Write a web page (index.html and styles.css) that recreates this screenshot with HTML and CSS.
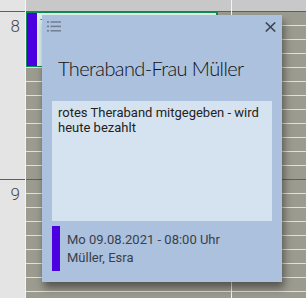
FILE: index.html
```html
<!DOCTYPE html>
<html lang="de">
<head>
<meta charset="utf-8">
<title>Kalender</title>
<link rel="stylesheet" href="styles.css">
</head>
<body>
<div class="cal">
  <div class="times">
    <div class="pre"></div>
    <div class="hour"><span class="hour-label">8</span></div>
    <div class="hour"><span class="hour-label">9</span></div>
  </div>
  <div class="day">
    <div class="pre"></div>
    <div class="hour slots"></div>
    <div class="hour slots"></div>
    <div class="event">
      <div class="event-bar"></div>
      <div class="event-body">Theraband-Frau Müller</div>
    </div>
  </div>
  <div class="day">
    <div class="pre"></div>
    <div class="hour slots"></div>
    <div class="hour slots"></div>
  </div>

  <div class="popup">
    <div class="popup-head">
      <svg class="icon-list" width="14" height="12" viewBox="0 0 14 12" aria-hidden="true">
        <g fill="#707c8e"><rect x="0" y="1.2" width="2" height="1.6"/><rect x="0" y="5.6" width="2" height="1.6"/><rect x="0" y="10" width="2" height="1.6"/></g>
        <g stroke="#707c8e" stroke-width="1.5"><line x1="3.5" y1="2" x2="14" y2="2"/><line x1="3.5" y1="6.4" x2="14" y2="6.4"/><line x1="3.5" y1="10.8" x2="14" y2="10.8"/></g>
      </svg>
      <svg class="icon-close" width="11" height="10" viewBox="0 0 11 10" aria-hidden="true">
        <g stroke="#3d4450" stroke-width="1.6"><line x1="0.8" y1="0.5" x2="10.2" y2="9.5"/><line x1="10.2" y1="0.5" x2="0.8" y2="9.5"/></g>
      </svg>
    </div>
    <div class="popup-title">Theraband-Frau Müller</div>
    <div class="popup-notes">rotes Theraband mitgegeben - wird heute bezahlt</div>
    <div class="popup-foot">
      <div class="foot-bar"></div>
      <div class="foot-text">
        <div>Mo 09.08.2021 - 08:00 Uhr</div>
        <div>Müller, Esra</div>
      </div>
    </div>
  </div>
</div>
</body>
</html>
```

FILE: styles.css
```css
html, body {
  margin: 0;
  padding: 0;
}
body {
  width: 306px;
  height: 298px;
  overflow: hidden;
  font-family: Roboto, "Liberation Sans", sans-serif;
  background: #ffffff;
}
.cal {
  position: relative;
  display: grid;
  grid-template-columns: 25px 205px 1fr;
  column-gap: 1px;
  background: #f4f4f2;
  height: 298px;
  overflow: hidden;
}
.times {
  background: #e4e4e4;
}
.pre {
  height: 11px;
}
.day .pre {
  background: #c8c8c8;
}
.day {
  position: relative;
  background: #9b9b90;
}
.hour {
  height: 167px;
  border-top: 1px solid #0f8a55;
}
.hour-label {
  display: block;
  text-align: right;
  padding: 4px 5px 0 0;
  font-size: 17px;
  line-height: 20px;
  font-weight: 300;
  color: #444;
}
.slots {
  background: repeating-linear-gradient(to bottom, transparent 0 13px, #e2e2dc 13px 14px);
}
.event {
  position: absolute;
  left: 0;
  top: 11px;
  width: 192px;
  height: 56px;
  box-sizing: border-box;
  border: 2px solid #0f8a55;
  border-left-width: 1px;
  border-bottom-width: 1px;
  display: flex;
  background: #dff2e8;
}
.event-bar {
  width: 10px;
  background: #4a00e0;
}
.event-body {
  padding: 4px 0 0 3px;
  font-size: 11px;
  color: #555;
}
.popup {
  position: absolute;
  left: 42px;
  top: 15px;
  width: 240px;
  height: 267px;
  background: #abc1de;
  box-shadow: 2px 6px 8px rgba(0, 0, 0, 0.45);
  display: flex;
  flex-direction: column;
}
.popup-head {
  display: flex;
  justify-content: space-between;
  align-items: flex-start;
  padding: 5px 6px 0 5px;
  height: 20px;
}
.icon-close {
  margin-top: 2px;
}
.popup-title {
  margin-top: 16px;
  padding-left: 16px;
  font-family: Lato, "Open Sans", sans-serif;
  font-weight: 300;
  font-size: 20px;
  line-height: 24px;
  letter-spacing: -0.6px;
  color: #111;
}
.popup-notes {
  margin: 21px 10px 0;
  height: 120px;
  box-sizing: border-box;
  padding: 4px 6px;
  background: #d5e2f0;
  font-size: 13px;
  line-height: 15px;
  color: #222;
}
.popup-foot {
  margin: 5px 10px 0;
  display: flex;
  align-items: center;
  gap: 7px;
}
.foot-bar {
  width: 8px;
  height: 45px;
  background: #4a00e0;
}
.foot-text {
  font-size: 13px;
  line-height: 18px;
  color: #3a3f48;
}
```
